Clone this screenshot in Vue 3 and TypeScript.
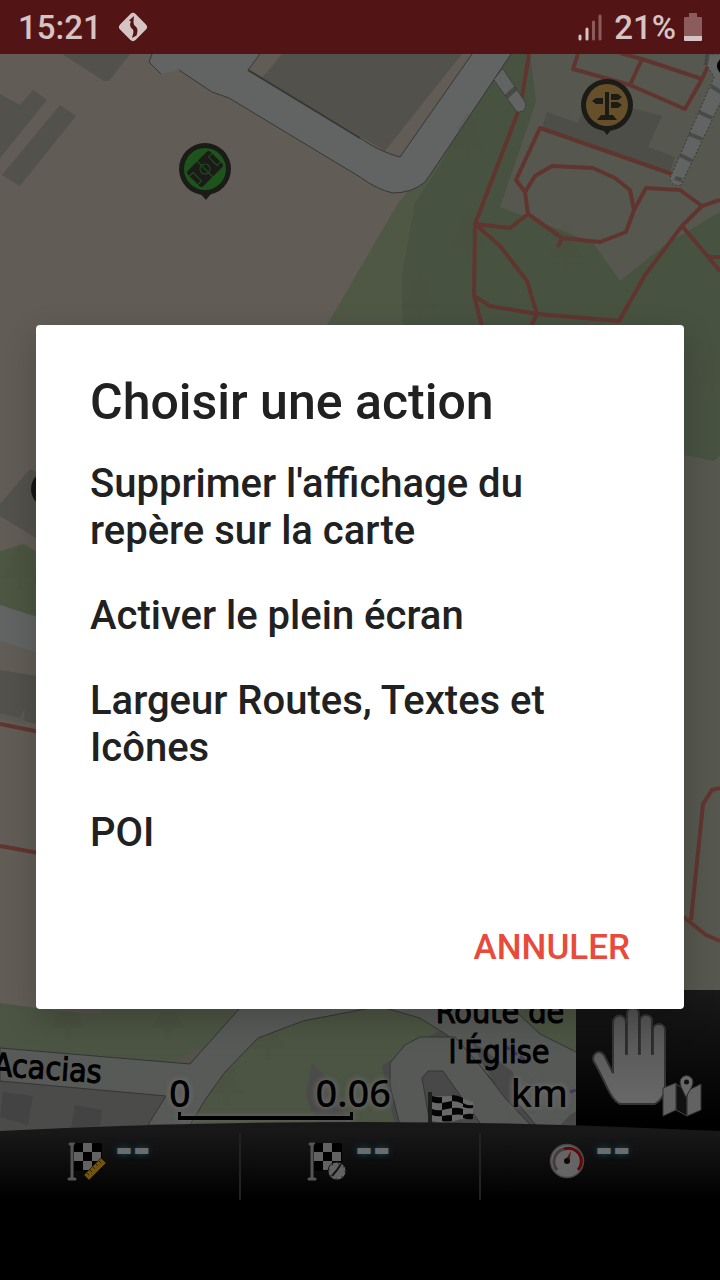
<script setup lang="ts">
import { ref } from 'vue'

interface Cell {
  id: string
  label: string
  value: string
}

const open = ref(true)

const actions: string[] = [
  "Supprimer l'affichage du repère sur la carte",
  'Activer le plein écran',
  'Largeur Routes, Textes et Icônes',
  'POI',
]

const cells: Cell[] = [
  { id: 'distance', label: 'Distance restante', value: '--' },
  { id: 'time', label: 'Temps restant', value: '--' },
  { id: 'speed', label: 'Vitesse', value: '--' },
]

const checks: number[][] = [[1, 0], [0, 1], [2, 1], [1, 2]]

const trees: number[][] = [
  [468, 140], [468, 240], [420, 300], [565, 250],
  [68, 1020], [168, 1020], [268, 1040], [226, 1085], [20, 570], [712, 375],
]

const close = () => {
  open.value = false
}
</script>

<template>
  <div class="screen">
    <header class="status">
      <div class="status-group">
        <span>15:21</span>
        <svg class="nav-icon" viewBox="0 0 30 30" aria-hidden="true">
          <rect x="4" y="4" width="22" height="22" rx="4" transform="rotate(45 15 15)" fill="#d6c4c4" />
          <path d="M16 4 L11 8.500 L13 9.500 C11 13 12.500 15.500 15 17.500 C16 20 15 22 14 26 L18.500 23.500 C20 19 20 16 17 14 C15 12 15.500 9 16 4 Z" fill="#521414" />
        </svg>
      </div>
      <div class="status-group right">
        <svg class="signal" viewBox="0 0 24 27" aria-hidden="true">
          <g stroke-width="3" stroke-linecap="round">
            <path d="M2 22V25M9 15V25" stroke="#d6c4c4" />
            <path d="M15.500 8V25M22 2V25" stroke="#8c5b5c" />
          </g>
        </svg>
        <span>21%</span>
        <svg class="battery" viewBox="0 0 18 28" aria-hidden="true">
          <path d="M5 0H13V4H17a1 1 0 0 1 1 1V23H0V5a1 1 0 0 1 1-1H5Z" fill="#8c5b5c" />
          <path d="M0 23H18V27a1 1 0 0 1-1 1H1a1 1 0 0 1-1-1Z" fill="#d6c4c4" />
        </svg>
      </div>
    </header>

    <main class="stage">
      <svg class="map" viewBox="0 54 720 1226" preserveAspectRatio="xMidYMin slice" role="img" aria-label="Carte">
        <rect x="0" y="54" width="720" height="1226" fill="#615d56" />
        <path d="M327 325 L397 205 L440 150 L480 54 H720 V1280 H380 V325 Z" fill="#4f5745" />
        <path d="M415 203 L440 165 L500 54 H720 V456 L714 461 L684 455 L404 400 L402 275 Z" fill="#485241" />
        <path d="M530 54 L536 102 L500 207 L560 230 L593 243 L620 281 L665 245 L720 212 V54 Z" fill="#56584f" />
        <path d="M684 455 L714 461 L720 456 V1010 H600 V440 Z" fill="#56584f" />

        <g fill="#53514b">
          <path d="M62 54 L104 81 H109 L130 54 Z" />
          <path d="M0 94 L20 105 L33 90 L47 100 L0 158 Z" />
          <path d="M60 105 L76 116 L20 186 L2 175 Z" />
          <path d="M282 54 L262 78 L385 151 L462 54 Z" />
          <path d="M0 504 L30 469 L36 471 V538 L0 516 Z" />
          <path d="M0 670 L50 678 V728 L0 714 Z" />
        </g>
        <path d="M0 713 L20 718 L23 711 L25 711 L23 724 L0 718 Z" fill="#5b5953" />
        <path d="M547 112 L578 123 L588 97 L662 116 L648 147 L675 157 L670 172 L542 128 Z" fill="#4d4e47" />

        <path d="M152 54 L149 62 L161 74 L179 70 L212 92 L229 98 L360 177 Q378 190 393 193 Q412 193 425 182 L430 175 L511 54 H472 L400 157 Q380 152 360 138 L248 70 L260 54 Z" fill="#616462" />
        <path d="M179 70 L212 92 L229 98 L360 177 Q378 190 393 193 Q412 193 425 182 L430 175 L511 54 M472 54 L400 157 Q380 152 360 138 L248 70 L260 54 M152 54 L149 62 L161 74" fill="none" stroke="#373836" stroke-width="1" />
        <path d="M248 70 L360 138" stroke="#373836" stroke-width="2" />
        <path d="M0 551 L24 544 L50 560 V622 L0 605 Z" fill="#4c5642" />
        <path d="M0 605 L50 621 V657 L0 641 Z" fill="#616462" />

        <g fill="none" stroke="#61352f" stroke-width="4" stroke-linejoin="round">
          <path d="M529 54 L522 97 M518 112 L475 224 L474 296 L483 330" />
          <path d="M475 224 L510 228 L528 214 L525 192 L535 176 L552 166 L593 168 L615 178 L630 190 L634 210 L626 232 L600 242 L562 238 L528 214 M562 238 L558 247" />
          <path d="M525 192 L516 180 L540 128 L672 174" />
          <path d="M634 210 L646 188 L680 190 L702 206 L720 200 M702 206 L682 226 L645 275 L619 321 L537 314 L490 306 L474 296 M682 226 L720 271 M709 257 H720" />
          <path d="M475 224 L500 246 L527 281 L537 314 L530 328" />
          <path d="M578 54 L573 69 L630 85 L685 109 L702 79 L642 59 L620 53 M642 59 L630 85 M702 79 L708 66" />
          <path d="M0 724 L50 734 M0 846 L50 855" />
          <path d="M720 788 L712 790 L703 804 L691 920 M680 914 L706 935 L720 941" />
        </g>

        <path d="M494 80 L503 69 L525 102 Q528 112 517 112 Z" fill="#616462" />
        <path d="M494 80 L517 112 Q528 112 525 102 L503 69" fill="none" stroke="#373836" stroke-dasharray="2 1" />
        <path d="M506 97 L516 88" stroke="#3d3e3c" stroke-width="5" opacity="0.700" />
        <path d="M713 54 L706 54 V64 L714 77 L670 178 Q671 187 681 185 L724 95 V54 Z" fill="#616462" stroke="#373836" stroke-dasharray="2 2" />
        <g stroke="#3d3e3c" stroke-width="4" opacity="0.650">
          <path d="M708 54 L706 65 M711 86 L722 93 M699 112 L712 118 M689 134 L702 139 M680 155 L692 161 M675 178 L682 180" />
        </g>
        <circle cx="726" cy="66" r="9" fill="#000" />

        <circle cx="50" cy="489" r="19" fill="#171714" />

        <g>
          <path d="M197 190 L206 200 L214 190 Z" fill="#1b1c18" />
          <circle cx="205" cy="169" r="26" fill="#1b1c18" />
          <circle cx="205" cy="169" r="21" fill="#1c541c" />
          <g transform="rotate(-45 205 169)">
            <rect x="189" y="158" width="32" height="22" rx="3" fill="#1b1c18" />
            <g fill="none" stroke="#1c541c" stroke-width="1">
              <path d="M205 158V180M189 163H194V175H189M221 163H216V175H221" />
              <circle cx="205" cy="169" r="5" />
            </g>
          </g>
        </g>

        <g>
          <path d="M599 125 L607 135 L615 125 Z" fill="#1b1c18" />
          <circle cx="607" cy="105" r="26" fill="#1b1c18" />
          <circle cx="607" cy="105" r="21" fill="#665029" />
          <path d="M605 92H609V115H613L617 120H597L601 115H605ZM611 94H618L622 97L618 100H611ZM603 98H596L592 101L596 104H603ZM611 102H618L622 105L618 108H611Z" fill="#1b1c18" />
        </g>

        <path d="M0 1003 L36 1008 L100 1014 L102 1009 H720 V1140 H0 Z" fill="#4c5443" />
        <g v-for="(t, i) in trees" :key="i" :transform="`translate(${t[0]} ${t[1]})`">
          <path d="M0-28 L-12-10 H-6 L-18 8 H-3 V20 H3 V8 H18 L6-10 H12 Z" fill="#4a4839" opacity="0.120" />
        </g>
        <path d="M172 1063 L205 1045 L190 1064 Z" fill="#55524c" />
        <path d="M55 1009 L102 1014 L103 1009 Z" fill="#55524c" />
        <path d="M0 1081 L166 1096 L148 1128 L0 1135 Z" fill="#4b4b4a" />
        <path d="M3 1092 L33 1096 L28 1125 L0 1117 Z M75 1105 L102 1110 L100 1126 L71 1128 Z" fill="#434343" />
        <path d="M0 1048 L190 1064 L240 1008 H370 L303 1021 L258 1038 L225 1072 L205 1100 L190 1125 H148 L166 1096 L0 1081 Z" fill="#585a58" stroke="#343534" />
        <path d="M312 1063 L338 1090 L346 1123 H316 L306 1095 Z" fill="#4b4b4a" />
        <path d="M382 1066 L440 1030 L560 1060 L576 1130 H396 Z" fill="#484848" />
        <path d="M385 1008 L420 1018 L455 1040 L505 1093 L515 1100 L540 1130 H570 L580 1110 V1054 L540 1034 L512 1008 Z" fill="#575957" stroke="#343534" />
        <path d="M401 1130 L390 1085 V1063 L405 1045 L420 1037 H455 L482 1068 L505 1098 L535 1130 H485 L455 1088 L443 1071 H428 L422 1078 L431 1130 Z" fill="#575957" stroke="#343534" />
        <path d="M471 1040 L513 1072 L520 1100 L508 1101 L483 1065 Z" fill="#474847" />
        <path d="M560 1125 L570 1115 L582 1108 V1130 Z" fill="#484848" />
        <path d="M505 1046 L525 1060 M570 1092 L579 1089" stroke="#3c3a58" stroke-width="3" stroke-dasharray="6 3" />

        <g>
          <path d="M428 1092 H432 V1126 H428 Z" fill="#20211f" />
          <path d="M432 1097 Q442 1096 450 1096 T473 1102 V1119 Q462 1118 454 1121 T432 1121 Z" fill="#696969" />
          <path d="M432 1096 Q438 1098 442 1097 V1103 Q437 1104 432 1102 Z M452 1095 Q458 1095 463 1098 V1104 Q458 1101 452 1101 Z M442 1103 Q447 1102 452 1101 V1108 Q447 1109 442 1110 Z M463 1103 Q468 1106 473 1105 V1108 Q468 1109 463 1107 Z M432 1109 Q437 1111 442 1110 V1116 Q437 1117 432 1115 Z M452 1108 Q458 1107 463 1109 V1115 Q458 1114 452 1115 Z M442 1116 Q447 1115 452 1115 V1121 Q447 1122 442 1121 Z M463 1115 Q468 1113 473 1114 V1119 Q468 1120 463 1118 Z" fill="#050505" />
        </g>

        <g class="map-label">
          <text x="101" y="1083" text-anchor="end" transform="rotate(4 101 1083)">Acacias</text>
          <text x="500" y="1023" text-anchor="middle">Route de</text>
          <text x="499" y="1063" text-anchor="middle">l'Église</text>
        </g>
      </svg>

      <div class="hud">
        <div class="scale">
          <div class="scale-labels">
            <div class="scale-range"><span>0</span><span>0.06</span></div>
            <span>km</span>
          </div>
          <div class="ruler"></div>
        </div>
        <button class="mode" type="button" aria-label="Déplacer la carte">
          <svg viewBox="576 990 144 146" aria-hidden="true">
            <defs>
              <linearGradient id="hand" x1="0" y1="0" x2="0" y2="1">
                <stop offset="0" stop-color="#525252" />
                <stop offset="1" stop-color="#686868" />
              </linearGradient>
            </defs>
            <path d="M613 1073 V1023 C613 1013 626 1013 626 1023 V1054 H627 V1014 C627 1006 639 1006 639 1014 V1054 H640 V1021 C640 1013 652 1013 652 1021 V1054 H653 V1030 C653 1022 665 1022 665 1030 V1087 C665 1096 660 1101 655 1104 H620 C610 1100 604 1078 594 1062 C591 1055 598 1048 604 1055 Z" fill="url(#hand)" stroke="#333" stroke-width="2" />
            <path d="M626 1023V1054M639 1015V1054M652 1023V1054" stroke="#2c2c2c" stroke-width="2" />
            <path d="M663 1088 L676 1083 V1110 L663 1116 Z M687 1091 L701 1084 V1110 L687 1116 Z" fill="#626262" stroke="#333" />
            <path d="M676 1084 L687 1091 V1116 L676 1110 Z" fill="#111" stroke="#444" />
            <path d="M686 1098 C684 1092 680 1087 680 1082 A6.500 6.500 0 0 1 693 1082 C693 1087 688 1092 686 1098 Z" fill="#686868" stroke="#262626" />
            <circle cx="686.500" cy="1082" r="2.500" fill="#111" />
          </svg>
        </button>
      </div>

      <footer class="panel">
        <svg class="curve" viewBox="0 0 720 10" preserveAspectRatio="none" aria-hidden="true">
          <path d="M0 9 Q360 -9 720 9 V10 H0 Z" fill="#181818" />
        </svg>
        <div class="cells">
          <div v-for="cell in cells" :key="cell.id" class="cell" :aria-label="cell.label">
            <svg class="cell-icon" viewBox="0 0 40 40" aria-hidden="true">
              <template v-if="cell.id !== 'speed'">
                <path d="M5 2V37M2 37H8M3 2H7" stroke="#555" stroke-width="3" stroke-linecap="round" />
                <rect x="7" y="1" width="28" height="28" rx="3" fill="#000" />
                <rect v-for="(c, i) in checks" :key="i" :x="7 + c[0] * 9" :y="1 + c[1] * 9" width="9" height="9" fill="#626262" />
              </template>
              <g v-if="cell.id === 'distance'">
                <path d="M17 33 L34 16 L39 21 L22 38 Z" fill="#765407" stroke="#2e2205" />
                <path d="M20 31L22 33M23 28L25 30M26 25L28 27M29 22L31 24M32 19L34 21" stroke="#2e2205" />
              </g>
              <g v-if="cell.id === 'time'">
                <circle cx="30" cy="29" r="9" fill="#626262" stroke="#111" />
                <path d="M34 22L30 28L25 34" stroke="#151515" stroke-width="2" fill="none" />
                <circle cx="30" cy="29" r="7.500" fill="none" stroke="#333" stroke-width="1.500" stroke-dasharray="1 5" />
              </g>
              <g v-if="cell.id === 'speed'">
                <circle cx="20" cy="19" r="16.500" fill="#656565" stroke="#464646" stroke-width="1.500" />
                <path d="M10 28A13 13 0 0 1 17 7" fill="none" stroke="#463c3c" stroke-width="3" />
                <path d="M17 7A13 13 0 0 1 31 28" fill="none" stroke="#610707" stroke-width="3" />
                <path d="M24 9L22 21L18 19Z" fill="#6b0907" />
                <circle cx="20" cy="19" r="3" fill="#090909" />
              </g>
            </svg>
            <span class="value">{{ cell.value }}</span>
          </div>
        </div>
      </footer>
    </main>

    <div v-if="open" class="backdrop">
      <section class="dialog" role="dialog" aria-modal="true" aria-labelledby="dialog-title">
        <h1 id="dialog-title">Choisir une action</h1>
        <ul>
          <li v-for="action in actions" :key="action">
            <button type="button" class="action" @click="close">{{ action }}</button>
          </li>
        </ul>
        <button type="button" class="cancel" @click="close">ANNULER</button>
      </section>
    </div>
  </div>
</template>

<style>
body {
  margin: 0;
  background: #000;
}
</style>

<style scoped>
.screen {
  position: relative;
  display: flex;
  flex-direction: column;
  min-height: 100vh;
  overflow: hidden;
  font-family: Roboto, "Liberation Sans", sans-serif;
}

button {
  margin: 0;
  padding: 0;
  border: 0;
  background: none;
  color: inherit;
  font: inherit;
  text-align: left;
  cursor: pointer;
}

.status {
  display: flex;
  align-items: center;
  justify-content: space-between;
  height: 54px;
  padding: 0 18px;
  background: #521414;
  color: #d6c4c4;
  font-size: 33px;
  font-weight: 500;
}

.status-group {
  display: flex;
  align-items: center;
  gap: 16px;
}

.status-group.right {
  gap: 8px;
}

.nav-icon {
  width: 30px;
  height: 30px;
}

.signal {
  width: 24px;
  height: 27px;
  margin-right: 4px;
}

.battery {
  width: 18px;
  height: 28px;
}

.stage {
  position: relative;
  display: flex;
  flex: 1;
  flex-direction: column;
  justify-content: flex-end;
}

.map {
  position: absolute;
  inset: 0;
  width: 100%;
  height: 100%;
}

.map-label {
  font-family: "DejaVu Sans Condensed", "DejaVu Sans", sans-serif;
  font-size: 32px;
  fill: #000;
  stroke: #000;
  stroke-width: 1px;
}

.hud {
  position: relative;
  display: flex;
  align-items: flex-end;
  justify-content: space-between;
}

.scale {
  flex: 1;
  padding: 0 8px 2px 169px;
  color: #000;
  font-family: "Noto Sans", sans-serif;
  font-size: 38px;
  font-weight: 500;
  line-height: 38px;
  text-shadow: 0 0 6px #6c6c6c, 0 0 6px #6c6c6c;
}

.scale-labels {
  display: flex;
  justify-content: space-between;
  margin-bottom: 1px;
}

.scale-range {
  display: flex;
  justify-content: space-between;
  width: 222px;
}

.ruler {
  width: 169px;
  height: 4px;
  margin-left: 9px;
  border: solid #000;
  border-width: 0 3px 4px;
  filter: drop-shadow(0 0 3px #6c6c6c);
}

.mode {
  width: 144px;
  height: 146px;
  margin-bottom: -14px;
  border-radius: 0 0 0 8px;
  background: linear-gradient(#191919, #000 134px);
}

.mode svg {
  display: block;
  width: 100%;
  height: 100%;
}

.panel {
  position: relative;
  height: 158px;
}

.curve {
  display: block;
  width: 100%;
  height: 10px;
}

.cells {
  display: grid;
  grid-template-columns: repeat(3, 1fr);
  height: 148px;
  background: linear-gradient(#181818, #000 68px);
}

.cell {
  display: flex;
  align-items: flex-start;
  gap: 8px;
  height: 58px;
  margin-top: 1px;
  padding: 9px 0 0 67px;
}

.cell + .cell {
  margin-left: -1px;
  border-left: 2px solid #222;
  padding-left: 66px;
}

.cell-icon {
  width: 40px;
  height: 40px;
}

.value {
  color: #6c6c6c;
  font-family: "DejaVu Sans", sans-serif;
  font-size: 43px;
  font-weight: 700;
  line-height: 12px;
  text-shadow: 0 0 6px #0b4a66;
}

.backdrop {
  position: absolute;
  inset: 54px 0 0;
  display: flex;
  align-items: center;
  justify-content: center;
  padding: 0 36px;
}

.dialog {
  display: flex;
  flex: 1;
  flex-direction: column;
  padding: 47px 54px 31px;
  border-radius: 4px;
  background: #fff;
  color: #212121;
  font-weight: 500;
  box-shadow: 0 10px 32px rgba(0, 0, 0, 0.2);
}

h1 {
  margin: 0;
  font-size: 50px;
  font-weight: 500;
  line-height: 60px;
}

ul {
  display: flex;
  flex-direction: column;
  gap: 38px;
  margin: 28px 0 62px;
  padding: 0;
  list-style: none;
}

.action {
  display: block;
  width: 100%;
  font-size: 40px;
  line-height: 47px;
}

.cancel {
  align-self: flex-end;
  height: 60px;
  color: #e84b3c;
  font-size: 35px;
  line-height: 60px;
}
</style>
